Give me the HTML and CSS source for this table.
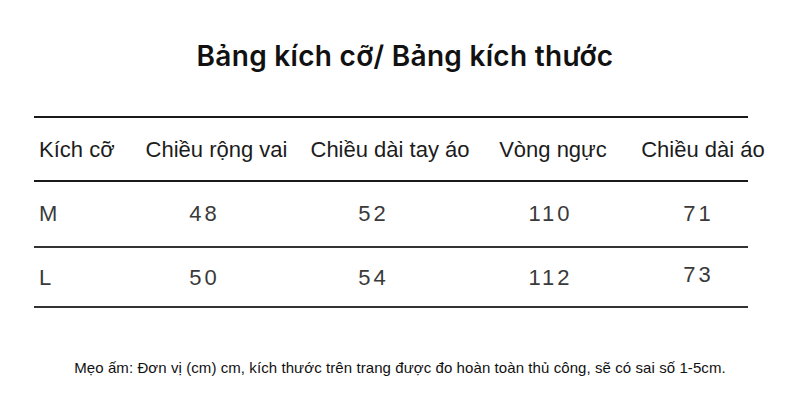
FILE: index.html
```html
<!DOCTYPE html>
<html lang="vi">
<head>
<meta charset="utf-8">
<title>Bảng kích cỡ</title>
<link rel="stylesheet" href="styles.css">
</head>
<body>
<main class="page">
  <h1 class="title">Bảng kích cỡ/ Bảng kích thước</h1>
  <div class="table">
    <div class="row head">
      <div class="cell first">Kích cỡ</div>
      <div class="cell">Chiều rộng vai</div>
      <div class="cell">Chiều dài tay áo</div>
      <div class="cell">Vòng ngực</div>
      <div class="cell">Chiều dài áo</div>
    </div>
    <div class="row data r1">
      <div class="cell first">M</div>
      <div class="cell c2">48</div>
      <div class="cell c3">52</div>
      <div class="cell c4">110</div>
      <div class="cell c5">71</div>
    </div>
    <div class="row data r2">
      <div class="cell first">L</div>
      <div class="cell c2">50</div>
      <div class="cell c3">54</div>
      <div class="cell c4">112</div>
      <div class="cell c5 up">73</div>
    </div>
  </div>
  <p class="note">Mẹo ấm: Đơn vị (cm) cm, kích thước trên trang được đo hoàn toàn thủ công, sẽ có sai số 1-5cm.</p>
</main>
</body>
</html>
```
FILE: styles.css
```css
html, body {
  margin: 0;
  padding: 0;
  background: #ffffff;
}
.page {
  width: 800px;
  height: 408px;
  overflow: hidden;
  display: flex;
  flex-direction: column;
  align-items: center;
}
.title {
  margin: 38px 0 0 0;
  padding-left: 10px;
  font-family: "Inter", "Liberation Sans", sans-serif;
  font-weight: 600;
  font-size: 28px;
  line-height: 36px;
  color: #111;
  letter-spacing: 0.3px;
}
.table {
  width: 714px;
  margin-top: 42px;
  align-self: flex-start;
  margin-left: 34px;
  border-top: 2px solid #1a1a1a;
}
.row {
  display: grid;
  grid-template-columns: 98px 169px 178px 148px 152px;
  align-items: center;
  width: 714px;
}
.row.head {
  height: 62px;
  border-bottom: 2px solid #1a1a1a;
  font-family: "Liberation Sans", Arial, sans-serif;
  font-size: 22px;
  color: #1c1c1c;
}
.row.head .cell {
  text-align: center;
  white-space: nowrap;
  padding-top: 2px;
}
.row.head .cell.first {
  text-align: left;
  padding-left: 5px;
}
.row.data {
  font-family: "Liberation Sans", Arial, sans-serif;
  font-size: 22px;
  color: #3a3a3a;
  letter-spacing: 3px;
  border-bottom: 2px solid #333;
}
.row.r1 { height: 64px; }
.row.r2 { height: 56px; padding-top: 2px; }
.row.data .cell { text-align: center; }
.row.data .cell.first { text-align: left; padding-left: 5px; letter-spacing: 0; }
.row.data .c2 { padding-right: 24px; }
.row.data .c3 { padding-right: 33px; }
.row.data .c4 { padding-right: 5px; }
.row.data .c5 { padding-right: 9px; }
.row.data .up { margin-top: -6px; }
.note {
  margin: 51px 0 0 0;
  font-family: "Liberation Sans", Arial, sans-serif;
  font-size: 15px;
  line-height: 18px;
  letter-spacing: 0.08px;
  color: #111;
}
```
